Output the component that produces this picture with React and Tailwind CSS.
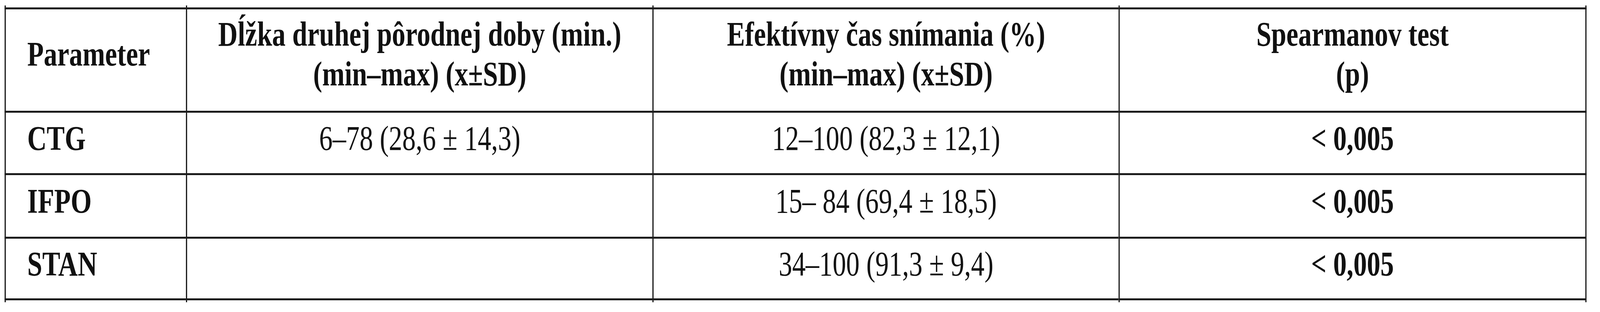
import React, { useEffect, useState } from 'react';

// the table is drawn for a 5224px wide page; narrower windows squeeze it horizontally
const PAGE_WIDTH = 5224;

const headers = [
  { lines: ['Parameter'], align: 'left' },
  { lines: ['Dĺžka druhej pôrodnej doby (min.)', '(min–max) (x±SD)'] },
  { lines: ['Efektívny čas snímania (%)', '(min–max) (x±SD)'] },
  { lines: ['Spearmanov test', '(p)'] },
];

const rows = [
  { name: 'CTG', duration: '6–78 (28,6 ± 14,3)', time: '12–100 (82,3 ± 12,1)', p: '< 0,005' },
  { name: 'IFPO', duration: '', time: '15– 84 (69,4 ± 18,5)', p: '< 0,005' },
  { name: 'STAN', duration: '', time: '34–100 (91,3 ± 9,4)', p: '< 0,005' },
];

const line = 'border-[#1c1c1c]';

export default function App() {
  const [scale, setScale] = useState(() => Math.min(1, window.innerWidth / PAGE_WIDTH));

  useEffect(() => {
    const onResize = () => setScale(Math.min(1, window.innerWidth / PAGE_WIDTH));
    window.addEventListener('resize', onResize);
    return () => window.removeEventListener('resize', onResize);
  }, []);

  return (
    <div className="h-screen w-full overflow-hidden bg-white">
      <div
        className="w-[5224px] origin-top-left pt-[14px] pl-[15px] text-[#111]"
        style={{
          fontFamily: '"Liberation Serif", "Times New Roman", serif',
          transform: `scaleX(${scale})`,
        }}
      >
        <div className="grid w-max grid-cols-[592px_1523px_1522px_1528px] grid-rows-[5px_265px_160px_163px_163px_5px] text-[88px] leading-[102px]">
          {/* vertical rules poke out above the table */}
          {headers.map((_, i) => (
            <div key={`top-${i}`} className={`border-l-4 ${line} ${i === 3 ? 'border-r-4' : ''}`} />
          ))}

          {/* Header */}
          {headers.map((h, i) => (
            <div
              key={i}
              className={`flex items-center border-t-[5px] border-l-4 ${line} pb-[30px] font-bold ${
                h.align === 'left' ? 'justify-start pl-[70px]' : 'justify-center text-center'
              } ${i === 3 ? 'border-r-4' : ''}`}
            >
              <div>
                {h.lines.map((l, j) => (
                  <div key={j} className="whitespace-nowrap">{l}</div>
                ))}
              </div>
            </div>
          ))}

          {/* Body */}
          {rows.map((r, i) => {
            const last = i === rows.length - 1;
            const cell = `flex items-center border-t-[5px] border-l-4 ${line} pb-[24px] whitespace-nowrap ${
              last ? 'border-b-[5px]' : ''
            }`;
            return (
              <React.Fragment key={r.name}>
                <div className={`${cell} pl-[70px] font-bold`}>{r.name}</div>
                <div className={`${cell} justify-center`}>{r.duration}</div>
                <div className={`${cell} justify-center`}>{r.time}</div>
                <div className={`${cell} justify-center border-r-4 font-bold`}>{r.p}</div>
              </React.Fragment>
            );
          })}

          {/* ...and below it */}
          {headers.map((_, i) => (
            <div key={`bottom-${i}`} className={`border-l-4 ${line} ${i === 3 ? 'border-r-4' : ''}`} />
          ))}
        </div>
      </div>
    </div>
  );
}
